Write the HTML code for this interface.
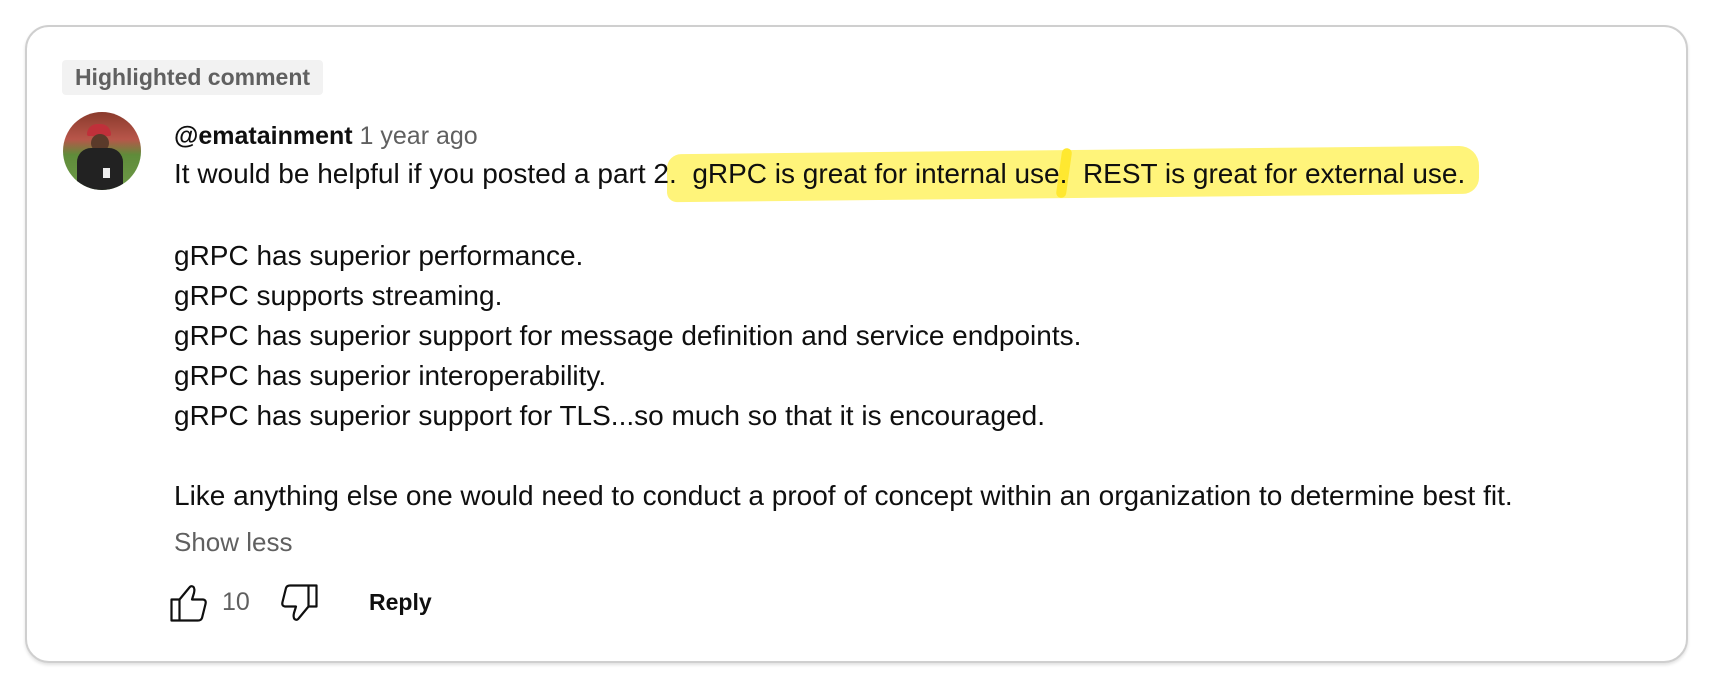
<!DOCTYPE html>
<html><head><meta charset="utf-8"><style>
html,body{margin:0;padding:0;background:#fff;width:1710px;height:686px;overflow:hidden;font-family:"Liberation Sans",Arial,sans-serif;color:#0f0f0f}
.card{position:absolute;left:25px;top:25px;width:1659px;height:634px;border:2px solid #cfcfcf;border-radius:24px;box-shadow:0 2px 3px rgba(0,0,0,.12)}
.badge{position:absolute;left:62px;top:60px;width:261px;height:35px;background:#f2f2f2;border-radius:4px;color:#606060;font-weight:bold;font-size:23px;line-height:35px;text-align:center}
.av{position:absolute;left:63px;top:112px;width:78px;height:78px;border-radius:50%;overflow:hidden;background:linear-gradient(#8a3a2c 0%,#b8564a 35%,#5f8c3a 55%,#6e9a48 100%)}
.t{position:absolute;white-space:pre;font-size:28px;line-height:40px}
.hl{position:absolute;left:667px;top:150px;width:812px;height:48px;background:#fff47a;border-radius:14px 20px 16px 10px;transform:skewY(-0.6deg)}
</style></head><body>
<div class="card"></div>
<div class="badge">Highlighted comment</div>
<div class="av">
 <div style="position:absolute;left:24px;top:12px;width:24px;height:12px;background:#c0303a;border-radius:12px 12px 2px 2px"></div>
 <div style="position:absolute;left:28px;top:22px;width:18px;height:18px;background:#5a3a2a;border-radius:50%"></div>
 <div style="position:absolute;left:14px;top:36px;width:46px;height:50px;background:#222;border-radius:14px 14px 0 0"></div>
 <div style="position:absolute;left:40px;top:56px;width:7px;height:10px;background:#eee"></div>
</div>
<div class="t" style="left:174px;top:116px;font-size:25px;"><b>@ematainment</b> <span style="color:#606060">1 year ago</span></div>
<div class="hl"></div>
<div style="position:absolute;left:1059px;top:148px;width:10px;height:50px;background:#ffe830;border-radius:6px;transform:rotate(8deg)"></div>
<div class="t" style="left:174px;top:154px">It would be helpful if you posted a part 2.  gRPC is great for internal use.  REST is great for external use.</div>
<div class="t" style="left:174px;top:236px">gRPC has superior performance.
gRPC supports streaming.
gRPC has superior support for message definition and service endpoints.
gRPC has superior interoperability.
gRPC has superior support for TLS...so much so that it is encouraged.

Like anything else one would need to conduct a proof of concept within an organization to determine best fit.</div>
<div class="t" style="left:174px;top:522px;color:#606060;font-size:26px">Show less</div>
<svg style="position:absolute;left:170px;top:584px" width="40" height="38" viewBox="0 0 40 38"><path d="M1.5 15.5h8v21h-8z M9.5 15.5 L19 4 Q21 1 23.5 3 Q25 5 24 9 L22 15.5 H33 Q36.5 16 35.5 20 L32 34 Q31 36.5 28 36.5 H9.5" fill="none" stroke="#0f0f0f" stroke-width="2.2" stroke-linejoin="round"/></svg>
<div class="t" style="left:222px;top:582px;color:#606060;font-size:25px">10</div>
<svg style="position:absolute;left:278px;top:584px" width="40" height="38" viewBox="0 0 40 38"><path d="M30.5 1.5h8v21h-8z M30.5 22.5 L21 34 Q19 37 16.5 35 Q15 33 16 29 L18 22.5 H7 Q3.5 22 4.5 18 L8 4 Q9 1.5 12 1.5 H30.5" fill="none" stroke="#0f0f0f" stroke-width="2.2" stroke-linejoin="round"/></svg>
<div class="t" style="left:369px;top:582px;font-weight:bold;font-size:23px">Reply</div>
</body></html>
